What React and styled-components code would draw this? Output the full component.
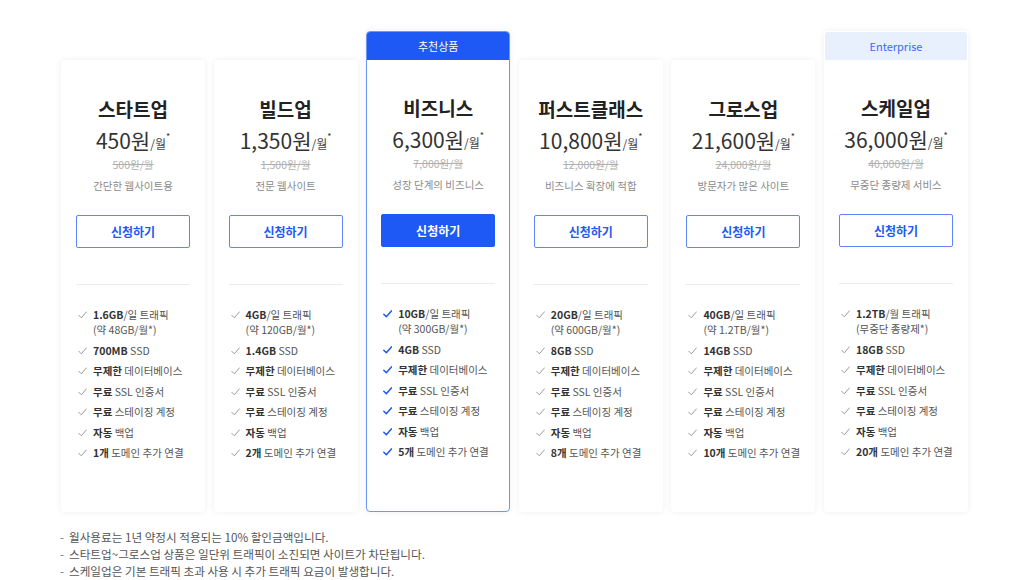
import styled, { createGlobalStyle } from "styled-components";

const Global = createGlobalStyle`
  * { box-sizing: border-box; }
  body {
    margin: 0;
    background: #fff;
    font-family: "Noto Sans CJK KR", "Noto Sans", sans-serif;
    color: #333;
  }
`;

const BLUE = "#1e58f5";

const plans = [
  {
    name: "스타트업", price: "450원", old: "500원/월", desc: "간단한 웹사이트용",
    features: [["1.6GB", "/일 트래픽", "(약 48GB/월*)"], ["700MB", " SSD"], ["무제한", " 데이터베이스"], ["무료", " SSL 인증서"], ["무료", " 스테이징 계정"], ["자동", " 백업"], ["1개", " 도메인 추가 연결"]],
  },
  {
    name: "빌드업", price: "1,350원", old: "1,500원/월", desc: "전문 웹사이트",
    features: [["4GB", "/일 트래픽", "(약 120GB/월*)"], ["1.4GB", " SSD"], ["무제한", " 데이터베이스"], ["무료", " SSL 인증서"], ["무료", " 스테이징 계정"], ["자동", " 백업"], ["2개", " 도메인 추가 연결"]],
  },
  {
    name: "비즈니스", price: "6,300원", old: "7,000원/월", desc: "성장 단계의 비즈니스", tag: "추천상품", featured: true,
    features: [["10GB", "/일 트래픽", "(약 300GB/월*)"], ["4GB", " SSD"], ["무제한", " 데이터베이스"], ["무료", " SSL 인증서"], ["무료", " 스테이징 계정"], ["자동", " 백업"], ["5개", " 도메인 추가 연결"]],
  },
  {
    name: "퍼스트클래스", price: "10,800원", old: "12,000원/월", desc: "비즈니스 확장에 적합",
    features: [["20GB", "/일 트래픽", "(약 600GB/월*)"], ["8GB", " SSD"], ["무제한", " 데이터베이스"], ["무료", " SSL 인증서"], ["무료", " 스테이징 계정"], ["자동", " 백업"], ["8개", " 도메인 추가 연결"]],
  },
  {
    name: "그로스업", price: "21,600원", old: "24,000원/월", desc: "방문자가 많은 사이트",
    features: [["40GB", "/일 트래픽", "(약 1.2TB/월*)"], ["14GB", " SSD"], ["무제한", " 데이터베이스"], ["무료", " SSL 인증서"], ["무료", " 스테이징 계정"], ["자동", " 백업"], ["10개", " 도메인 추가 연결"]],
  },
  {
    name: "스케일업", price: "36,000원", old: "40,000원/월", desc: "무중단 종량제 서비스", tag: "Enterprise",
    features: [["1.2TB", "/월 트래픽", "(무중단 종량제*)"], ["18GB", " SSD"], ["무제한", " 데이터베이스"], ["무료", " SSL 인증서"], ["무료", " 스테이징 계정"], ["자동", " 백업"], ["20개", " 도메인 추가 연결"]],
  },
];

const notes = [
  "월사용료는 1년 약정시 적용되는 10% 할인금액입니다.",
  "스타트업~그로스업 상품은 일단위 트래픽이 소진되면 사이트가 차단됩니다.",
  "스케일업은 기본 트래픽 초과 사용 시 추가 트래픽 요금이 발생합니다.",
];

const Page = styled.div`
  padding: 31px 56px 0 61px;
`;

const Grid = styled.div`
  display: grid;
  grid-template-columns: repeat(6, 144px);
  column-gap: 8.6px;
`;

const Plan = styled.div`
  display: flex;
  flex-direction: column;
  margin-top: ${(p) => (p.$tagged ? 0 : 29)}px;
  height: ${(p) => (p.$tagged ? 481 : 452)}px;
  border-radius: 4px;
  border: 1px solid ${(p) => (p.$featured ? "#6e96f8" : "transparent")};
  box-shadow: 0 0 6px rgba(0, 0, 0, 0.07);
  background: #fff;
  overflow: hidden;
`;

const Tag = styled.div`
  height: 28px;
  flex-shrink: 0;
  display: flex;
  align-items: center;
  justify-content: center;
  font-size: 11px;
  background: ${(p) => (p.$featured ? BLUE : "#e8effd")};
  color: ${(p) => (p.$featured ? "#fff" : "#3a6af5")};
`;

const Body = styled.div`
  flex: 1;
  padding: 36px 14px 0;
  display: flex;
  flex-direction: column;
  align-items: stretch;
  text-align: center;
`;

const Name = styled.div`
  font-size: 19px;
  font-weight: 700;
  line-height: 24px;
  color: #222;
`;

const Price = styled.div`
  margin-top: 6px;
  font-size: 21px;
  line-height: 26px;
  color: #333;
  white-space: nowrap;
`;

const Per = styled.span`
  font-size: 12px;
  color: #444;
`;

const Star = styled.sup`
  font-size: 9px;
  vertical-align: 9px;
  line-height: 0;
`;

const Old = styled.div`
  margin-top: 0;
  font-size: 10.5px;
  line-height: 16px;
  color: #b0b0b0;
  text-decoration: line-through;
`;

const Desc = styled.div`
  margin-top: 5px;
  font-size: 10.5px;
  line-height: 16px;
  color: #8a8a8a;
`;

const Button = styled.button`
  margin-top: 21px;
  height: 33px;
  width: 100%;
  border-radius: 2px;
  border: 1px solid ${(p) => (p.$featured ? BLUE : "#5d87f8")};
  background: ${(p) => (p.$featured ? BLUE : "#fff")};
  color: ${(p) => (p.$featured ? "#fff" : BLUE)};
  font-family: inherit;
  font-size: 12px;
  font-weight: 700;
  cursor: pointer;
`;

const Divider = styled.hr`
  margin: 36px 0 0;
  border: 0;
  border-top: 1px solid #ececec;
`;

const Features = styled.ul`
  list-style: none;
  margin: 0;
  padding: 22px 0 0 2px;
  display: flex;
  flex-direction: column;
  gap: 5.5px;
  text-align: left;
`;

const Feature = styled.li`
  display: flex;
  align-items: flex-start;
  gap: 6px;
  font-size: 10.5px;
  line-height: 15px;
  color: #555;
  white-space: nowrap;
`;

const Check = styled.svg`
  flex-shrink: 0;
  width: 9px;
  height: 8px;
  margin-top: 4px;
`;

const Strong = styled.b`
  font-weight: 700;
  color: #333;
`;

const Notes = styled.ul`
  list-style: none;
  margin: 17px 0 0 -1px;
  padding: 0;
`;

const Note = styled.li`
  font-size: 11.6px;
  line-height: 17px;
  color: #555;
  &::before {
    content: "-";
    margin-right: 5px;
    color: #777;
  }
`;

const CheckIcon = ({ featured }) => (
  <Check viewBox="0 0 9 8">
    <path
      d="M0.8 4.3 L3.3 6.8 L8.4 0.9"
      fill="none"
      stroke={featured ? BLUE : "#9a9a9a"}
      strokeWidth={featured ? 1.5 : 1}
      strokeLinecap="round"
      strokeLinejoin="round"
    />
  </Check>
);

const PlanCard = ({ plan }) => (
  <Plan $tagged={!!plan.tag} $featured={plan.featured}>
    {plan.tag && <Tag $featured={plan.featured}>{plan.tag}</Tag>}
    <Body>
      <Name>{plan.name}</Name>
      <Price>
        {plan.price}
        <Per>/월</Per>
        <Star>*</Star>
      </Price>
      <Old>{plan.old}</Old>
      <Desc>{plan.desc}</Desc>
      <Button $featured={plan.featured}>신청하기</Button>
      <Divider />
      <Features>
        {plan.features.map(([bold, rest, sub], i) => (
          <Feature key={i}>
            <CheckIcon featured={plan.featured} />
            <span>
              <Strong>{bold}</Strong>
              {rest}
              {sub && (
                <>
                  <br />
                  {sub}
                </>
              )}
            </span>
          </Feature>
        ))}
      </Features>
    </Body>
  </Plan>
);

export default function App() {
  return (
    <>
      <Global />
      <Page>
        <Grid>
          {plans.map((p) => (
            <PlanCard key={p.name} plan={p} />
          ))}
        </Grid>
        <Notes>
          {notes.map((n) => (
            <Note key={n}>{n}</Note>
          ))}
        </Notes>
      </Page>
    </>
  );
}
